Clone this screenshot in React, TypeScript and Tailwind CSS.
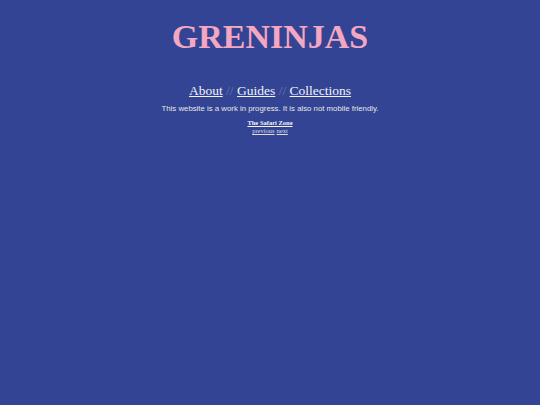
export default function App() {
  return (
    <div className="min-h-[405px] w-full bg-[#334494] flex flex-col items-center text-[#eeeeee]">
      <h1
        className="mt-[18px] text-[34px] leading-[38px] font-bold text-[#f4a7c0] tracking-normal"
        style={{ fontFamily: '"Liberation Serif", "Times New Roman", serif' }}
      >
        GRENINJAS
      </h1>
      <nav
        className="mt-[27px] text-[13.5px] leading-[16px] flex items-baseline"
        style={{ fontFamily: '"Liberation Serif", "Times New Roman", serif' }}
      >
        <a className="underline text-[#f2f2f2]">About</a>
        <span className="text-[#6b78a8] whitespace-pre"> // </span>
        <a className="underline text-[#f2f2f2]">Guides</a>
        <span className="text-[#6b78a8] whitespace-pre"> // </span>
        <a className="underline text-[#f2f2f2]">Collections</a>
      </nav>
      <p
        className="mt-[5px] text-[7.8px] leading-[10px] text-[#e6e6e6]"
        style={{ fontFamily: '"Liberation Sans", Arial, sans-serif' }}
      >
        This website is a work in progress. It is also not mobile friendly.
      </p>
      <div
        className="mt-[5px] flex flex-col items-center text-[6.5px] leading-[8px]"
        style={{ fontFamily: '"Liberation Serif", "Times New Roman", serif' }}
      >
        <a className="underline font-bold text-[#f2f2f2]">The Safari Zone</a>
        <div className="flex gap-[2px]">
          <a className="underline text-[#dddddd]">previous</a>
          <a className="underline text-[#dddddd]">next</a>
        </div>
      </div>
    </div>
  );
}
